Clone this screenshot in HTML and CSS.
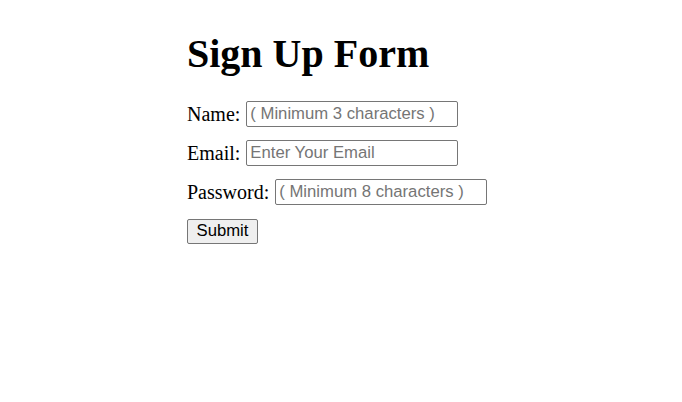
FILE: index.html
```html
<!DOCTYPE html>
<html>
<head>
<meta charset="utf-8">
<link rel="stylesheet" href="styles.css">
</head>
<body>
<div class="wrap">
  <h1 class="title">Sign Up Form</h1>
  <form class="form">
    <div class="row"><label class="lbl">Name:</label> <input class="field" type="text" placeholder="( Minimum 3 characters )"></div>
    <div class="row"><label class="lbl">Email:</label> <input class="field" type="email" placeholder="Enter Your Email"></div>
    <div class="row"><label class="lbl">Password:</label> <input class="field" type="password" placeholder="( Minimum 8 characters )"></div>
    <div class="row"><button class="btn" type="button">Submit</button></div>
  </form>
</div>
</body>
</html>
```
FILE: styles.css
```css
body {
  margin: 0;
  background: #fff;
  font-family: "Liberation Serif", "Times New Roman", serif;
  color: #000;
}
.wrap {
  padding: 0 0 0 187px;
}
.title {
  font-size: 40px;
  font-weight: bold;
  margin: 31px 0 24px;
  line-height: 46px;
}
.form {
  display: flex;
  flex-direction: column;
  gap: 13px;
}
.row {
  display: flex;
  align-items: center;
  gap: 6px;
  font-size: 20px;
  height: 26px;
}
.field {
  width: 212px;
  height: 26px;
  box-sizing: border-box;
  font-family: "Liberation Sans", Arial, sans-serif;
  font-size: 16.7px;
  padding: 1px 3px;
  border: 1px solid #767676;
  border-radius: 2px;
  margin: 0;
}
.field::placeholder {
  color: #757575;
}
.btn {
  width: 71px;
  height: 25px;
  box-sizing: border-box;
  font-family: "Liberation Sans", Arial, sans-serif;
  font-size: 16.7px;
  background: #efefef;
  border: 1px solid #767676;
  border-radius: 2px;
  padding: 0;
  color: #000;
}
```
